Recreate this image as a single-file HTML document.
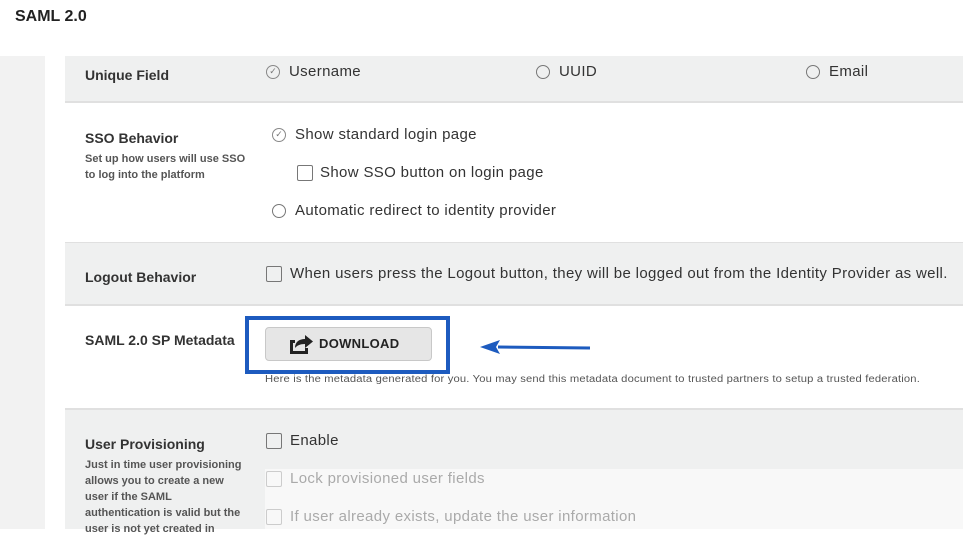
<!DOCTYPE html>
<html><head><style>
*{margin:0;padding:0;box-sizing:border-box}
body{width:963px;height:529px;overflow:hidden;background:#fff;font-family:"Liberation Sans",sans-serif;color:#333;position:relative}
.a{position:absolute;white-space:nowrap}
.t{font-size:15px;color:#333;letter-spacing:0.35px}
.lbl{font-size:14px;font-weight:bold;color:#333}
.sm{font-size:11px;color:#555;line-height:16px;font-weight:bold;white-space:normal}
.rad{width:14px;height:14px;border:1.5px solid #777;border-radius:50%}
.chk{width:16px;height:16px;border:1.5px solid #777;border-radius:2px}
.dis{border-color:#ccc}
</style></head><body>
<div class="a" style="left:15px;top:8px;font-size:16px;font-weight:bold;color:#222">SAML 2.0</div>
<div class="a" style="left:0;top:56px;width:45px;height:473px;background:#f2f2f2"></div>
<div class="a" style="left:65px;top:56px;width:898px;height:47px;background:#eff0f0;border-bottom:2px solid #e0e0e0"></div>
<div class="a" style="left:65px;top:242px;width:898px;height:64px;background:#eff0f0;border-top:1px solid #e0e0e0;border-bottom:2px solid #e0e0e0"></div>
<div class="a" style="left:65px;top:408px;width:898px;height:121px;background:#eff0f0;border-top:2px solid #e0e0e0"></div>
<div class="a" style="left:265px;top:469px;width:698px;height:60px;background:#f8f8f8"></div>

<div class="a lbl" style="left:85px;top:67px">Unique Field</div>
<div class="a" style="left:266px;top:65px;width:14px;height:14px;border:1.5px solid #888;border-radius:50%;font-size:9px;line-height:11px;text-align:center;color:#777">✓</div>
<div class="a t" style="left:289px;top:63px">Username</div>
<div class="a rad" style="left:536px;top:65px"></div>
<div class="a t" style="left:559px;top:63px">UUID</div>
<div class="a rad" style="left:806px;top:65px"></div>
<div class="a t" style="left:829px;top:63px">Email</div>

<div class="a lbl" style="left:85px;top:130px">SSO Behavior</div>
<div class="a sm" style="left:85px;top:151px;width:165px">Set up how users will use SSO<br>to log into the platform</div>
<div class="a" style="left:272px;top:128px;width:14px;height:14px;border:1.5px solid #888;border-radius:50%;font-size:9px;line-height:11px;text-align:center;color:#777">✓</div>
<div class="a t" style="left:295px;top:126px">Show standard login page</div>
<div class="a chk" style="left:297px;top:165px"></div>
<div class="a t" style="left:320px;top:164px">Show SSO button on login page</div>
<div class="a rad" style="left:272px;top:204px"></div>
<div class="a t" style="left:295px;top:202px">Automatic redirect to identity provider</div>

<div class="a lbl" style="left:85px;top:269px">Logout Behavior</div>
<div class="a chk" style="left:266px;top:266px"></div>
<div class="a t" style="left:290px;top:265px">When users press the Logout button, they will be logged out from the Identity Provider as well.</div>

<div class="a lbl" style="left:85px;top:332px">SAML 2.0 SP Metadata</div>
<div class="a" style="left:245px;top:316px;width:205px;height:58px;border:4px solid #1d5bbf"></div>
<div class="a" style="left:265px;top:327px;width:167px;height:34px;background:#e6e6e6;border:1px solid #c8c8c8;border-radius:4px"></div>
<svg class="a" style="left:289px;top:333px" width="26" height="22" viewBox="0 0 26 22"><path d="M1 7h5v3H4v8h12v-3h3v6H1z" fill="#222"/><path d="M6 15c0-6 4-9 10-9V2l8 6.5-8 6.5v-4c-5 0-8 1.5-10 4z" fill="#222"/></svg>
<div class="a" style="left:319px;top:336px;font-size:13px;font-weight:bold;color:#222;letter-spacing:0.3px">DOWNLOAD</div>
<svg class="a" style="left:478px;top:338px" width="115" height="20"><path d="M112 10L20 9" stroke="#1d5bbf" stroke-width="3"/><path d="M2 9L22 2L18 9L22 16z" fill="#1d5bbf"/></svg>
<div class="a" style="left:265px;top:374px;font-size:10px;color:#555;letter-spacing:0.15px;transform-origin:0 0;transform:scaleX(1.12)">Here is the metadata generated for you. You may send this metadata document to trusted partners to setup a trusted federation.</div>

<div class="a lbl" style="left:85px;top:436px">User Provisioning</div>
<div class="a sm" style="left:85px;top:457px;width:160px">Just in time user provisioning allows you to create a new user if the SAML<br>authentication is valid but the user is not yet created in</div>
<div class="a chk" style="left:266px;top:433px"></div>
<div class="a t" style="left:290px;top:432px">Enable</div>
<div class="a chk dis" style="left:266px;top:471px"></div>
<div class="a t" style="left:290px;top:470px;color:#aaa">Lock provisioned user fields</div>
<div class="a chk dis" style="left:266px;top:509px"></div>
<div class="a t" style="left:290px;top:508px;color:#aaa">If user already exists, update the user information</div>
</body></html>
